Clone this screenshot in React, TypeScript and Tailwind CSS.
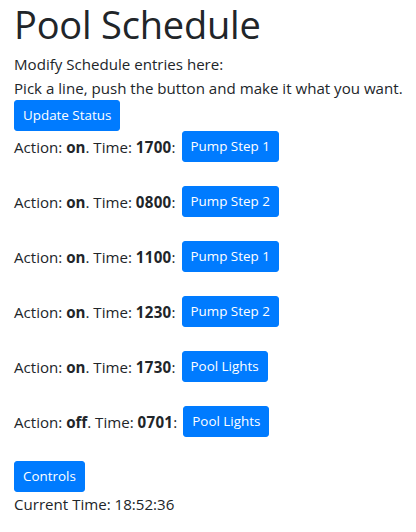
import React from "react";

const rows = [
  { action: "on", time: "1700", label: "Pump Step 1" },
  { action: "on", time: "0800", label: "Pump Step 2" },
  { action: "on", time: "1100", label: "Pump Step 1" },
  { action: "on", time: "1230", label: "Pump Step 2" },
  { action: "on", time: "1730", label: "Pool Lights" },
  { action: "off", time: "0701", label: "Pool Lights" },
];

function Btn({ children }: { children: React.ReactNode }) {
  return (
    <button className="inline-flex items-center h-[31px] px-2 text-[13.4px] leading-[21px] text-white bg-[#007bff] rounded-[3px] border border-[#007bff]">
      {children}
    </button>
  );
}

export default function App() {
  return (
    <div
      className="px-[14px] text-[#212529] text-[15.1px] leading-[24px]"
      style={{ fontFamily: '"Open Sans", sans-serif' }}
    >
      <h1 className="text-[38px] leading-[48px] font-normal mb-[4px] tracking-[-0.2px]">Pool Schedule</h1>
      <div>Modify Schedule entries here:</div>
      <div className="whitespace-nowrap">Pick a line, push the button and make it what you want.</div>
      <div className="flex">
        <Btn>Update Status</Btn>
      </div>
      {rows.map((r, i) => (
        <div key={i} className="flex items-center h-[31px] mb-[24px]">
          <span>
            Action: <b className="font-bold">{r.action}</b>. Time: <b className="font-bold tracking-[0.3px]">{r.time}</b>:
          </span>
          <span className="ml-[6px] flex">
            <Btn>{r.label}</Btn>
          </span>
        </div>
      ))}
      <div className="flex">
        <Btn>Controls</Btn>
      </div>
      <div>Current Time: 18:52:36</div>
    </div>
  );
}
